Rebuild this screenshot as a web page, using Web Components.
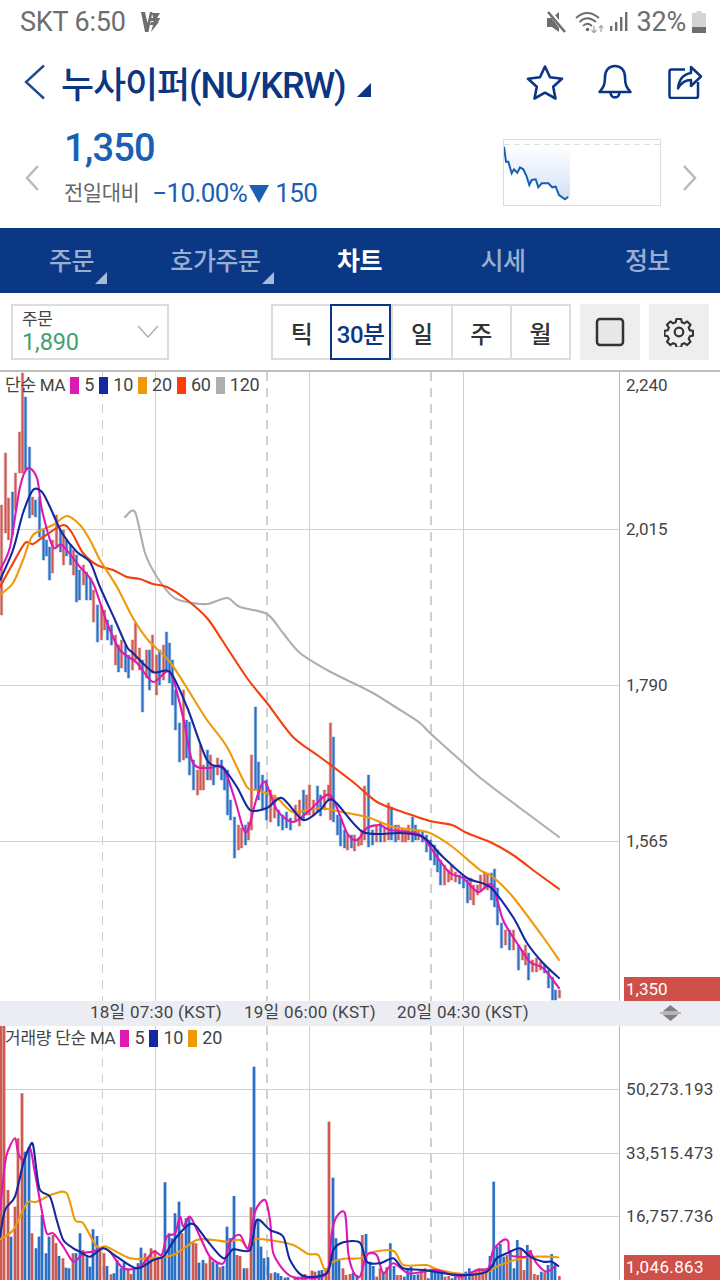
<!DOCTYPE html>
<html lang="ko"><head><meta charset="utf-8"><title>누사이퍼 차트</title>
<style>
html,body{margin:0;padding:0;background:#fff}
body{width:720px;height:1280px;overflow:hidden;font-family:Roboto,"Noto Sans CJK KR",sans-serif;display:flex;flex-direction:column}
</style></head><body>
<status-bar></status-bar>
<title-bar>누사이퍼(NU/KRW)</title-bar>
<price-summary></price-summary>
<nav-tabs></nav-tabs>
<chart-toolbar></chart-toolbar>
<price-chart></price-chart>
<time-bar></time-bar>
<volume-chart></volume-chart>
<script>
function def(name,html){customElements.define(name,class extends HTMLElement{constructor(){super();this.attachShadow({mode:'open'}).innerHTML=html;}});}
const FONT='font-family:Roboto,"Noto Sans CJK KR",sans-serif;';
def('status-bar',`<style>:host{display:flex;height:44px;box-sizing:border-box;padding:0 14px 0 20px;align-items:center;color:#6e6e6e;${FONT}font-size:27px;letter-spacing:-.2px}
span{line-height:44px}.r{margin-left:auto;display:flex;align-items:center}svg{display:block}</style>
<span>SKT 6:50</span>
<svg style="margin-left:15px" width="20" height="22" viewBox="0 0 20 22"><path d="M0 1h4l2.500 11L9 1h2.500L7.500 21H4zM11 2h8l-3 5h3l-1 3h-2l2 1-8 10 2-7h-3l1-3h3l-1-1h-3l1-3h2z" fill="#6e6e6e"/></svg>
<div class="r">
<svg width="21" height="22" viewBox="0 0 21 22" style="margin-right:8px"><path d="M1 7h5l7-6v20l-7-5H1z" fill="#6e6e6e"/><path d="M3 0l17 22" stroke="#fff" stroke-width="4.500"/><path d="M2 1l17 20" stroke="#6e6e6e" stroke-width="2.600"/></svg>
<svg width="29" height="22" viewBox="0 0 29 22" fill="none" stroke="#6e6e6e" stroke-width="1.800" style="margin-right:5px"><path d="M1 7Q12-3 24 7M4.500 11Q12 3.500 21 11M8 15Q12 10.500 17 15"/><circle cx="12.500" cy="18.500" r="1.800" fill="#6e6e6e" stroke="none"/><path d="M19 15v7M16.500 19l2.500 3 2.500-3M26 21v-6M24 17l2-2.500 2 2.500" stroke="#aaa" stroke-width="1.300"/></svg>
<svg width="20" height="22" viewBox="0 0 20 22" fill="#6e6e6e" style="margin-right:7px"><rect x="1" y="15" width="2.400" height="5"/><rect x="6" y="11" width="2.400" height="9"/><rect x="11" y="6" width="2.400" height="14"/><rect x="16" y="1" width="2.400" height="19"/></svg>
<span>32%</span>
<svg width="14" height="22" viewBox="0 0 14 22" style="margin-left:6px"><path d="M4.500 0h5v2H14v20H0V2h4.500z" fill="#d4d4d4"/><rect y="16" width="14" height="6" fill="#6e6e6e"/></svg>
</div>`);
def('title-bar',`<style>:host{display:flex;height:76px;align-items:center;box-sizing:border-box;padding:0 18px 0 23px;color:#0b3684;${FONT}}
.t{margin-left:15px;font-size:36px;font-weight:500;letter-spacing:-1.1px;white-space:nowrap}
.tri{width:0;height:0;border-left:14px solid transparent;border-bottom:14px solid #0b3684;margin:16px 0 0 11px}
.r{margin-left:auto;display:flex;align-items:center}svg{display:block}</style>
<svg width="23" height="36" viewBox="0 0 23 36" fill="none" stroke="#1f4b92" stroke-width="2.400"><path d="M21 1.500L3 18l18 16.500"/></svg>
<span class="t"><slot></slot></span><i class="tri"></i>
<div class="r">
<svg width="38" height="36" viewBox="0 0 38 36" fill="none" stroke="#0b3684" stroke-width="2.600" stroke-linejoin="round"><path d="M19 2.500l5 10.700 12 1.500-8.800 8 2.300 11.800L19 28.700 8.500 34.500l2.300-11.800L2 14.700l12-1.500z"/></svg>
<svg style="margin-left:33px" width="36" height="36" viewBox="0 0 36 36" fill="none" stroke="#0b3684" stroke-width="2.600" stroke-linejoin="round"><path d="M18 2c6.500 0 10 5 10 11 0 8 1.500 10.500 5.500 15h-31C6.500 23.500 8 21 8 13 8 7 11.500 2 18 2z"/><path d="M13.500 28.500c.5 6.500 8.500 6.500 9 0"/></svg>
<svg style="margin-left:35px" width="34" height="34" viewBox="0 0 34 34" fill="none" stroke="#0b3684" stroke-width="2.500" stroke-linejoin="round"><path d="M17 4.500H3.500a2 2 0 0 0-2 2V31a2 2 0 0 0 2 2H28a2 2 0 0 0 2-2V17"/><path d="M10 23.500c1-9 6-14.500 13-15.500V2l10 9.500-10 9.500v-6c-5 0-10 3-13 8.500z"/></svg>
</div>`);
def('price-summary',`<style>:host{display:flex;height:108px;box-sizing:border-box;${FONT}}
.ch{flex:none;width:64px;display:flex;align-items:center;padding:8px 0 0 24px;box-sizing:border-box}
.m{display:flex;flex-direction:column;padding-top:5px}
.p{font-size:38px;font-weight:500;color:#1a5fb4;line-height:46px;letter-spacing:-.8px}
.d{display:flex;align-items:center;margin-top:6px;line-height:32px;color:#1a5fb4;font-size:26px;letter-spacing:-.6px;white-space:nowrap}
.l{font-size:21px;color:#666;letter-spacing:-.5px;margin-right:13px}
.tri{width:0;height:0;border-left:10.500px solid transparent;border-right:10.500px solid transparent;border-top:18px solid #1a5fb4;margin:2px 6px 0 2px}
.s{margin-left:auto;margin-top:19px;width:158px;height:67px;box-sizing:border-box;border:1px solid #ddd;flex:none}
.e{flex:none;width:59px;display:flex;align-items:center;padding:8px 0 0 21px;box-sizing:border-box}svg{display:block}</style>
<div class="ch"><svg width="16" height="28" viewBox="0 0 16 28" fill="none" stroke="#b9b9b9" stroke-width="2.500"><path d="M14 2L3 14l11 12"/></svg></div>
<div class="m"><div class="p">1,350</div><div class="d"><span class="l">전일대비</span><span>−10.00%</span><i class="tri"></i><span>150</span></div></div>
<div class="s"><svg width="156" height="65" viewBox="0 0 156 65"><defs><linearGradient id="g" x1="0" y1="0" x2="0" y2="1"><stop offset="0" stop-color="#fff"/><stop offset="1" stop-color="#d3e1f4"/></linearGradient></defs>
<path d="M0 4.500H156" stroke="#e0e0e0" stroke-width="1" stroke-dasharray="6 4"/>
<path d="M0 6.700L2 21.700H4.300L7.700 33.300 10 29.300 13.300 32.700 16 27.300 19.300 29.300 22.700 36.700 25.300 45 27.700 40 31.700 39.300 34.300 47.300 37.700 43.300H44.300L48.300 47.300 51.700 46.700 55 55 61 59.300 64.300 56.700 66 56V5H0z" fill="url(#g)"/>
<path d="M0 6.700L2 21.700H4.300L7.700 33.300 10 29.300 13.300 32.700 16 27.300 19.300 29.300 22.700 36.700 25.300 45 27.700 40 31.700 39.300 34.300 47.300 37.700 43.300H44.300L48.300 47.300 51.700 46.700 55 55 61 59.300 64.300 56.700" fill="none" stroke="#1a5fb4" stroke-width="2"/></svg></div>
<div class="e"><svg width="16" height="28" viewBox="0 0 16 28" fill="none" stroke="#b9b9b9" stroke-width="2.500"><path d="M2 2l11 12L2 26"/></svg></div>`);
def('nav-tabs',`<style>:host{display:flex;height:65px;background:#0b3885;${FONT}font-size:25px;font-weight:500;color:#9aafd0;letter-spacing:-.4px}
div{position:relative;display:flex;align-items:center;justify-content:center;padding-bottom:3px;box-sizing:border-box}
.on{color:#fff;font-weight:700}
.a::after{content:"";position:absolute;width:0;height:0;border-left:12px solid transparent;border-bottom:12px solid #a9bad8;bottom:9px;right:var(--r)}</style>
<div class="a" style="width:143px;--r:36px"><span>주문</span></div>
<div class="a" style="width:145px;--r:14px"><span>호가주문</span></div>
<div class="on" style="width:143px">차트</div><div style="width:144px">시세</div><div style="width:145px">정보</div>`);
def('chart-toolbar',`<style>:host{display:flex;height:79px;box-sizing:border-box;padding:11px 11px 0 11px;${FONT}border-bottom:2px solid #bdbdbd}
.sel{width:158px;height:56px;box-sizing:border-box;border:2px solid #ddd;padding:4px 0 0 9px;position:relative;color:#444;font-size:17px;line-height:19px;letter-spacing:-.4px}
.sel b{display:block;font-weight:400;color:#43a070;font-size:23.500px;line-height:26px;letter-spacing:-.1px}
.sel svg{position:absolute;right:8px;top:19px}
.seg{margin-left:102px;display:flex;height:56px;box-sizing:border-box;border:2px solid #ddd;width:300px}
.seg span{flex:1;display:flex;align-items:center;justify-content:center;border-left:2px solid #ddd;font-size:24px;font-weight:500;color:#333;letter-spacing:-.5px;box-sizing:border-box}
.seg span:first-child{border-left:0}
.seg .on{border:2px solid #0b3684;margin:-2px 0;color:#0b3684;flex:none;width:61px;background:#fff}
.ic{width:60px;height:56px;background:#eee;margin-left:9px;display:flex;align-items:center;justify-content:center}svg{display:block}</style>
<div class="sel">주문<b>1,890</b><svg width="22" height="14" viewBox="0 0 22 14" fill="none" stroke="#aaa" stroke-width="1.300"><path d="M1 1l10 11L21 1"/></svg></div>
<div class="seg"><span>틱</span><span class="on">30분</span><span>일</span><span>주</span><span>월</span></div>
<div class="ic"><svg width="30" height="30" viewBox="0 0 30 30" fill="#e8e8e8" stroke="#333" stroke-width="2.500"><rect x="2" y="2" width="26" height="26" rx="3"/></svg></div>
<div class="ic"><svg width="30" height="30" viewBox="0 0 30 30" fill="none" stroke="#333" stroke-width="2.200" stroke-linejoin="round"><circle cx="15" cy="15" r="4.300"/><path d="M12.500 1.500h5l.7 3.500 2.700 1.200 3-2 3.500 3.500-2 3 1.200 2.700 3.400.7v5l-3.400.7-1.200 2.700 2 3-3.500 3.500-3-2-2.700 1.200-.7 3.400h-5l-.7-3.400-2.700-1.200-3 2-3.500-3.500 2-3-1.200-2.700-3.400-.7v-5l3.400-.7 1.200-2.700-2-3 3.500-3.500 3 2 2.700-1.200z" transform="translate(.5 .5) scale(.95)"/></svg></div>`);

const C={mag:'#df18b4',navy:'#1428a0',org:'#ee9a08',red:'#f4400e',gray:'#aeaeae',rb:'#cc5a52',bb:'#2a6fc4'};
const smooth=a=>{let d='M'+a[0]+' '+a[1];for(let i=0;i<a.length-2;i+=2){const x0=a[i],y0=a[i+1],x1=a[i+2],y1=a[i+3],xm=a[Math.max(i-2,0)],ym=a[Math.max(i-1,1)],xn=a[Math.min(i+4,a.length-2)],yn=a[Math.min(i+5,a.length-1)];
d+=` C${(x0+(x1-xm)/7).toFixed(1)} ${(y0+(y1-ym)/7).toFixed(1)} ${(x1-(xn-x0)/7).toFixed(1)} ${(y1-(yn-y0)/7).toFixed(1)} ${x1.toFixed(1)} ${y1.toFixed(1)}`}return d};
const line=(a,c,w)=>`<path d="${smooth(a)}" fill="none" stroke="${c}" stroke-width="${w}" stroke-linejoin="round" stroke-linecap="round"/>`;
const bar=(x,t,b,c,w)=>`<rect x="${(x-w/2).toFixed(1)}" y="${t}" width="${w}" height="${(b-t).toFixed(1)}" fill="${c}"/>`;
const grid=(hs,h)=>{let s='';hs.forEach(y=>s+=`<path d="M0 ${y+.5}H619" stroke="#d2d2d2"/>`);[155,309,463].forEach(x=>s+=`<path d="M${x+.5} 0V${h}" stroke="#cfcfcf"/>`);
s+=`<path d="M102.500 0V${h}" stroke="#cfcfcf" stroke-dasharray="9 7"/>`;[267,431].forEach(x=>s+=`<path d="M${x} 0V${h}" stroke="#cfcfcf" stroke-width="2" stroke-dasharray="9 7"/>`);
s+=`<path d="M619.500 0V${h}" stroke="#b8b8b8"/>`;return s};
const chartCSS=`:host{display:block;position:relative;${FONT}overflow:hidden;flex:none}
svg{display:block;position:absolute;left:0;top:0}
.leg{position:absolute;left:5px;top:2px;display:flex;align-items:center;font-size:18px;line-height:22px;color:#444;white-space:nowrap;letter-spacing:-.2px}
.leg u{text-decoration:none;font-size:17px;letter-spacing:-.25px}
.leg i{display:block;width:9px;height:17px;margin:0 5px}
.ax{position:absolute;left:626px;font-size:17px;line-height:20px;color:#444;white-space:nowrap}
.hl{position:absolute;left:624px;right:0;background:#cf5048;color:#fff;font-size:17px;padding-left:2px;white-space:nowrap;box-sizing:border-box}`;
const MA={
 gray:[125,517,135,512,145,553,157,577,173,597,187,602,207,604,227,598,240,607,267,614,283,633,300,653,327,670,353,683,373,693,397,708,420,723,430,733,460,760,483,780,520,808,559,837],
 red:[0,587,12,565,25,543,33,544,43,537,63,525,72,533,83,553,97,565,113,570,127,577,140,579,153,584,167,587,187,600,207,618,222,640,247,678,267,703,293,737,320,757,353,782,377,802,400,811,430,821,452,825,467,833,490,842,513,855,537,873,559,889],
 org:[0,595,13,583,23,560,33,535,53,525,67,516,80,525,90,540,100,560,117,587,133,618,148,640,170,662,190,693,207,720,227,747,247,787,257,790,277,798,293,812,320,808,347,813,370,818,393,827,427,832,450,845,480,870,493,877,513,897,543,937,559,960],
 navy:[0,580,13,550,23,513,33,490,42,492,50,507,62,533,77,552,90,562,100,587,115,620,127,647,133,653,153,672,170,672,187,707,207,760,223,768,237,787,250,810,267,808,282,798,303,820,320,810,333,800,363,832,400,833,423,837,443,857,467,878,490,887,513,917,527,943,543,963,559,978],
 mag:[0,570,10,547,20,487,28,468,37,478,42,510,53,547,62,545,80,567,93,583,107,623,120,650,137,663,153,682,170,672,183,717,193,763,210,768,223,767,235,800,243,828,248,830,257,797,265,782,277,810,293,822,310,810,330,795,347,833,357,840,367,828,380,825,390,830,420,835,437,857,450,873,463,878,478,892,492,885,503,920,517,943,530,962,543,968,559,988]};
const SP=[[1,505,615,'r'],[5,453,533,'r'],[8,498,540,'r'],[12,492,535,'b'],[15,473,510,'r'],[19,432,473,'r'],[22,373,473,'r'],[25,397,470,'b'],[29,447,518,'b'],[32,497,515,'r'],[35,500,517,'b'],[39,497,537,'b'],[43,530,560,'b'],[46,540,556,'b'],[49,547,580,'b'],[52,540,573,'r'],[56,515,548,'r'],[60,530,552,'b'],[63,530,565,'r'],[66,540,556,'b'],[70,545,565,'b'],[73,550,575,'r'],[76,555,602,'b'],[79,570,600,'b'],[83,565,585,'r'],[86,572,600,'b'],[90,578,600,'b'],[93,590,622,'r'],[97,605,642,'b'],[101,606,640,'r'],[104,610,630,'r'],[107,620,640,'b'],[111,625,645,'b'],[115,635,665,'r'],[118,645,672,'b'],[121,640,668,'r'],[125,645,672,'b'],[128,655,678,'b'],[132,640,670,'r'],[135,623,660,'r'],[139,648,670,'r'],[142,660,712,'b'],[146,650,678,'r'],[149,650,690,'b'],[152,635,673,'r'],[156,655,695,'r'],[159,650,685,'b'],[163,645,680,'r'],[166,632,672,'b'],[169,643,683,'b'],[172,660,705,'b'],[175,690,730,'b'],[179,723,762,'b'],[183,690,760,'r'],[186,720,758,'b'],[189,722,775,'b'],[193,760,790,'b'],[197,770,795,'r'],[200,745,790,'r'],[203,765,790,'r'],[207,750,780,'b'],[210,755,780,'r'],[213,765,785,'b'],[217,758,775,'r'],[221,760,780,'b'],[224,768,790,'b'],[227,770,815,'b'],[230,800,820,'b'],[234,817,858,'b'],[238,825,850,'r'],[241,828,848,'r'],[245,825,845,'b'],[248,822,840,'r'],[251,755,830,'r'],[255,707,790,'b'],[258,762,800,'b'],[262,775,810,'b'],[266,780,820,'b'],[270,790,822,'r'],[274,795,818,'r'],[278,810,826,'b'],[282,815,830,'b'],[286,812,828,'b'],[290,818,830,'b'],[295,805,822,'r'],[299,800,826,'r'],[303,790,820,'b'],[306,795,815,'r'],[309,785,815,'r'],[313,800,816,'r'],[317,786,812,'b'],[320,795,816,'b'],[324,790,810,'r'],[328,785,800,'r'],[330,723,820,'r'],[333,737,822,'b'],[337,815,835,'b'],[340,818,846,'b'],[344,830,848,'b'],[347,835,850,'r'],[351,835,848,'b'],[354,835,851,'r'],[358,838,846,'r'],[361,830,845,'r'],[364,786,840,'r'],[368,775,847,'b'],[372,830,845,'b'],[376,825,842,'r'],[380,822,842,'b'],[384,828,842,'r'],[388,803,840,'r'],[391,807,840,'b'],[395,825,842,'b'],[398,825,840,'r'],[402,828,842,'r'],[405,830,842,'r'],[408,825,840,'r'],[412,817,842,'b'],[415,825,840,'b'],[418,830,840,'r'],[422,832,842,'b'],[426,835,852,'b'],[430,840,860,'b'],[434,845,865,'b'],[437,850,872,'b'],[440,860,885,'b'],[444,865,885,'r'],[448,870,882,'r'],[451,865,880,'r'],[455,872,882,'r'],[459,875,884,'b'],[463,876,888,'b'],[467,880,903,'b'],[470,878,900,'r'],[473,885,905,'r'],[477,885,895,'r'],[480,875,890,'r'],[484,872,888,'r'],[487,873,890,'r'],[491,873,900,'b'],[494,869,907,'b'],[497,888,925,'b'],[501,923,948,'b'],[505,930,945,'r'],[509,930,950,'b'],[513,930,950,'r'],[518,945,970,'b'],[522,950,960,'r'],[525,945,965,'r'],[528,953,980,'b'],[532,960,972,'r'],[536,958,972,'r'],[540,962,970,'r'],[544,965,973,'b'],[548,970,988,'b'],[552,977,1000,'b'],[555,990,1000,'b'],[559,990,998,'r']];
customElements.define('price-chart',class extends HTMLElement{constructor(){super();const H=629,O=372;let s=grid([157,313,469],H);
 s+=`<g transform="translate(0 ${-O})">`;
 SP.forEach(c=>{const col=c[3]=='r'?C.rb:C.bb;s+=`<rect x="${c[0]-1.25}" y="${c[1]-.5}" width="3.500" height="${c[2]-c[1]+1}" fill="${col}" opacity=".35"/>`+bar(c[0]+.5,c[1],c[2],col,2)});
 s+=line(MA.gray,C.gray,2.100)+line(MA.red,C.red,2.100)+line(MA.org,C.org,2.100)+line(MA.mag,C.mag,2.100)+line(MA.navy,C.navy,2.100);s+='</g>';
 this.attachShadow({mode:'open'}).innerHTML=`<style>${chartCSS}:host{height:${H}px}</style>
 <svg width="720" height="${H}">${s}</svg>
 <div class="leg"><u>단순 MA</u><i style="background:${C.mag}"></i>5<i style="background:${C.navy}"></i>10<i style="background:${C.org}"></i>20<i style="background:#fb3c04"></i>60<i style="background:${C.gray}"></i>120</div>
 <div class="ax" style="top:3px">2,240</div><div class="ax" style="top:147px">2,015</div><div class="ax" style="top:303px">1,790</div><div class="ax" style="top:459px">1,565</div>
 <div class="hl" style="top:605px;height:24px;line-height:24px">1,350</div>`;}});
def('time-bar',`<style>:host{display:block;position:relative;height:25px;background:#ebedf2;${FONT}font-size:17px;line-height:23px;color:#444;flex:none;letter-spacing:.25px}
span{position:absolute;top:0;white-space:nowrap}svg{position:absolute;left:659px;top:3px}</style>
<span style="left:90px">18일 07:30 (KST)</span><span style="left:244px">19일 06:00 (KST)</span><span style="left:397px">20일 04:30 (KST)</span>
<svg width="23" height="18" viewBox="0 0 23 18" fill="#808080"><path d="M11.500 1l8 6.500h-16zM1 8.500h21v1H1zM3.500 10.500h16l-8 6.500z"/></svg>`);
const V6=[[1,18,'r'],[4,18,'r'],[8,510,'r'],[11,650,'b'],[15,560,'r'],[18,355,'r'],[22,220,'r'],[25,395,'b'],[29,380,'b'],[32,640,'r'],[36,685,'b'],[39,650,'b'],[42,585,'b'],[46,700,'b'],[49,650,'b'],[53,645,'r'],[56,670,'r'],[59,708,'b'],[63,715,'r'],[66,743,'b'],[69,745,'b'],[73,700,'r'],[76,700,'b'],[80,640,'b'],[83,690,'r'],[87,712,'b'],[90,740,'b'],[93,628,'b'],[97,648,'b'],[100,690,'r'],[104,700,'r'],[107,738,'b'],[111,763,'r'],[114,760,'b'],[117,720,'b'],[121,745,'b'],[124,728,'b'],[128,750,'r'],[131,762,'r'],[134,745,'b'],[138,730,'b'],[141,683,'b'],[145,700,'r'],[148,715,'b'],[151,685,'r'],[155,690,'r'],[158,715,'r'],[162,715,'r'],[165,487,'b'],[169,640,'b'],[172,655,'b'],[175,580,'b'],[179,545,'b'],[182,640,'r'],[186,595,'b'],[189,590,'b'],[193,665,'r'],[196,670,'r'],[199,728,'b'],[203,720,'b'],[206,730,'r'],[210,710,'r'],[213,725,'b'],[217,730,'b'],[220,742,'r'],[223,738,'b'],[227,620,'b'],[230,655,'b'],[234,528,'b'],[237,705,'r'],[240,708,'r'],[244,745,'b'],[247,745,'r'],[251,562,'r'],[254,140,'b'],[258,600,'b'],[261,680,'b'],[264,715,'b'],[268,712,'b'],[271,760,'r'],[275,757,'b'],[278,760,'b'],[281,768,'b'],[285,773,'b'],[288,772,'b'],[295,770,'r'],[298,770,'b'],[302,765,'r'],[305,762,'r'],[312,752,'r'],[315,755,'r'],[319,752,'b'],[322,750,'b'],[326,745,'r'],[329,305,'r'],[333,473,'b'],[336,655,'b'],[339,720,'b'],[343,745,'r'],[346,765,'r'],[350,762,'r'],[353,758,'b'],[357,765,'b']];
const V7=[[7,645,'r'],[18,642,'b'],[30,725,'b'],[40,738,'b'],[50,770,'r'],[60,745,'r'],[70,755,'b'],[80,742,'r'],[91,670,'b'],[102,738,'b'],[112,765,'r'],[122,765,'r'],[133,770,'b'],[143,745,'b'],[153,740,'b'],[163,765,'b'],[174,763,'b'],[184,750,'r'],[195,745,'r'],[205,775,'b'],[215,752,'b'],[225,750,'b'],[235,750,'b'],[245,755,'b'],[255,770,'r'],[266,768,'r'],[276,775,'b'],[286,770,'b'],[297,772,'r'],[307,770,'r'],[317,755,'b'],[328,745,'b'],[338,755,'r'],[348,750,'r'],[358,745,'r'],[368,745,'r'],[378,745,'r'],[390,708,'b'],[401,485,'b'],[411,680,'b'],[421,672,'b'],[431,710,'b'],[441,705,'r'],[451,690,'b'],[462,745,'b'],[472,660,'b'],[482,685,'r'],[492,750,'r'],[502,675,'b'],[512,690,'r'],[523,762,'r'],[533,765,'r'],[544,755,'b'],[554,757,'r'],[564,735,'b'],[575,702,'b'],[585,730,'b'],[598,768,'r']];
const z=(a,ox)=>{const o=[];for(let i=0;i<a.length;i+=2){o.push(ox+a[i]/3,a[i+1]/3+1020-1026)}return o};
const VL={mag:z([0,570,15,430,25,390,45,355,55,400,70,420,90,385,105,460,125,570,140,640,160,640,190,680,220,725,250,700,275,695,310,685,330,695,370,745,420,740,460,695,485,705,500,650,525,640,540,590,550,620,570,590,600,650,630,710,670,730,690,665,720,645,745,685,765,575,795,540,810,600,820,700,860,760,900,775,980,760,995,640,1010,590,1035,580,1045,700,1060,755,1080,770],0).concat(z([20,705,50,705,70,760,100,730,145,760,190,755,230,750,300,770,350,750,385,745,400,690,430,660,445,665,450,705,500,710,510,695,530,730,560,755,590,735],360)),
navy:z([0,650,15,570,45,530,70,430,90,378,100,378,118,505,150,530,170,600,190,660,220,685,240,695,270,710,310,685,350,710,410,745,460,720,490,710,510,680,530,650,570,612,590,620,620,660,670,715,700,688,750,690,770,600,810,630,850,650,870,720,910,768,980,760,1000,690,1030,667,1080,668],0).concat(z([20,725,60,730,100,715,130,745,190,750,300,765,380,755,410,715,440,700,480,685,510,710,550,725,575,725,595,738],360)),
org:z([0,658,40,630,80,550,110,545,160,522,200,520,225,600,250,610,290,680,320,680,390,715,450,715,520,705,590,660,640,660,680,665,720,660,745,685,765,658,820,662,880,675,925,702,955,705,975,750,1000,725,1030,716,1080,715],0).concat(z([30,698,100,692,130,735,200,735,230,748,310,762,380,757,420,735,500,712,570,710,595,712],360))};
customElements.define('volume-chart',class extends HTMLElement{constructor(){super();const H=254;let s=grid([63,127,190],H);
 const draw=(x,t,c)=>{const col=c=='r'?C.rb:C.bb,y=t/3-6;s+=`<rect x="${(x-1.750).toFixed(1)}" y="${y.toFixed(1)}" width="3.500" height="${(H-y).toFixed(1)}" fill="${col}" opacity=".3"/>`+bar(x,y.toFixed(1),H,col,2.400)};
 V6.forEach(b=>draw(b[0],b[1],b[2]));V7.forEach(b=>draw(360+b[0]/3,b[1],b[2]));
 s+=line(VL.org,C.org,2.100)+line(VL.mag,C.mag,2.100)+line(VL.navy,C.navy,2.100);
 this.attachShadow({mode:'open'}).innerHTML=`<style>${chartCSS}:host{height:${H}px}.leg{top:1px}.ax{letter-spacing:.35px}.hl{letter-spacing:.35px}</style>
 <svg width="720" height="${H}">${s}</svg>
 <div class="leg"><u>거래량 단순 MA</u><i style="background:${C.mag}"></i>5<i style="background:${C.navy}"></i>10<i style="background:${C.org}"></i>20</div>
 <div class="ax" style="top:53px">50,273.193</div><div class="ax" style="top:117px">33,515.473</div><div class="ax" style="top:180px">16,757.736</div>
 <div class="hl" style="top:229px;height:25px;line-height:25px">1,046.863</div>`;}});
</script>
</body></html>
